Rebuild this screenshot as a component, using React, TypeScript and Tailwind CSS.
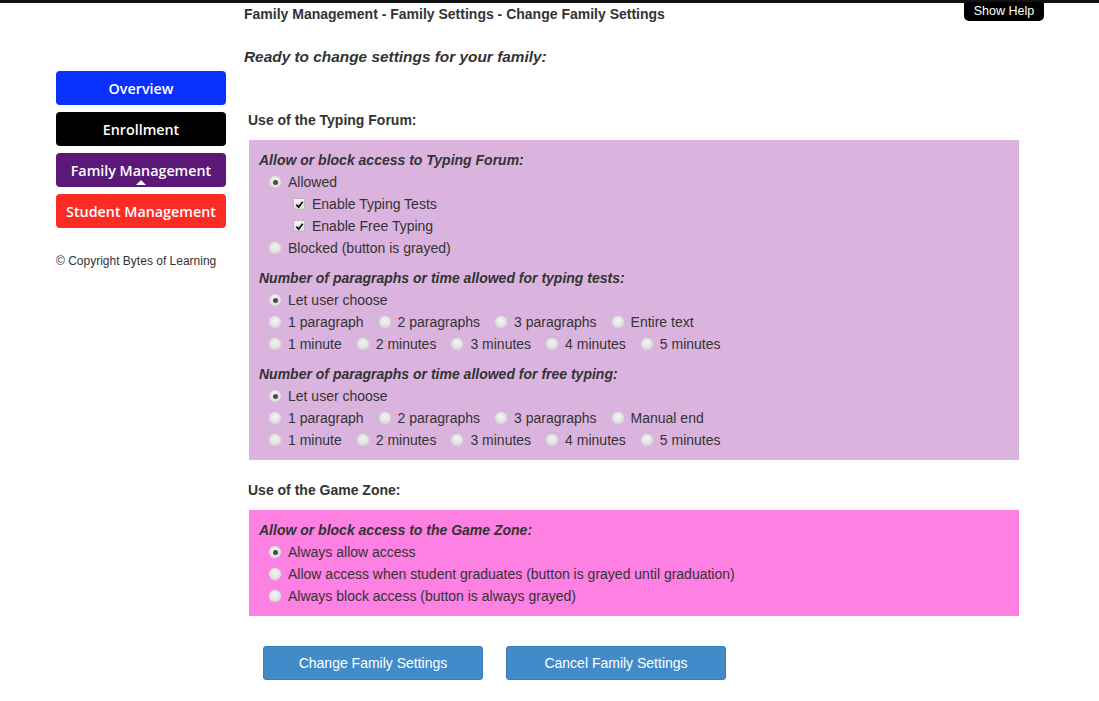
import React from "react";

function Radio({ checked = false }: { checked?: boolean }) {
  return (
    <span className="relative inline-flex w-[12px] h-[12px] rounded-full bg-[radial-gradient(circle_at_50%_40%,#f4f4f4_0%,#e2e2e2_55%,#c9c9c9_100%)] shrink-0 items-center justify-center shadow-[0_0_0_0.5px_#c4c4c4]">
      {checked && <span className="w-[5px] h-[5px] rounded-full bg-[#4a4a4a]" />}
    </span>
  );
}

function Check() {
  return (
    <span className="inline-flex w-[12px] h-[12px] shrink-0 items-center justify-center bg-[linear-gradient(#f6f6f6,#dcdcdc)] border border-[#b8b8b8] rounded-[2px]">
      <svg width="9" height="9" viewBox="0 0 10 10">
        <path d="M1.5 5.2 L4 7.8 L8.6 2" fill="none" stroke="#111" strokeWidth="2" />
      </svg>
    </span>
  );
}

function Row({ children, indent = 20 }: { children: React.ReactNode; indent?: number }) {
  return (
    <div className={`flex items-center h-[22px] ${indent === 20 ? "pl-[10px]" : "pl-[34px]"}`}>{children}</div>
  );
}

function Opt({ label, checked = false }: { label: string; checked?: boolean }) {
  return (
    <span className="inline-flex items-center mr-[15px]">
      <Radio checked={checked} />
      <span className="ml-[7px]">{label}</span>
    </span>
  );
}

function Heading({ children }: { children: React.ReactNode }) {
  return <div className="h-[22px] flex items-center font-bold italic text-[14px]">{children}</div>;
}

function SideBtn({ label, bg, tri = false }: { label: string; bg: string; tri?: boolean }) {
  return (
    <div
      className={`relative h-[34px] w-[170px] rounded-[4px] flex items-center justify-center pt-[2px] text-white text-[14.3px] font-semibold ${bg}`}
      style={{ fontFamily: '"Open Sans", sans-serif' }}
    >
      {label}
      {tri && (
        <span className="absolute bottom-[2px] left-[80px] w-0 h-0 border-l-[5px] border-r-[5px] border-b-[5px] border-l-transparent border-r-transparent border-b-white" />
      )}
    </div>
  );
}

export default function App() {
  return (
    <div
      className="w-[1099px] h-[701px] bg-white text-[#333] overflow-hidden"
      style={{ fontFamily: '"Liberation Sans", Arial, sans-serif' }}
    >
      <div className="h-[3px] bg-[#111]" />
      <div className="flex">
        <aside className="ml-[56px] w-[170px] pt-[68px] flex flex-col gap-[7px]">
          <SideBtn label="Overview" bg="bg-[#0a30fd]" />
          <SideBtn label="Enrollment" bg="bg-black" />
          <SideBtn label="Family Management" bg="bg-[#5b1878]" tri />
          <SideBtn label="Student Management" bg="bg-[#fc2b24]" />
          <div className="mt-[19px] text-[12px] text-[#333] leading-[14px]">© Copyright Bytes of Learning</div>
        </aside>
        <main className="ml-[18px] w-[800px]">
          <div className="flex justify-between items-start">
            <div className="text-[14px] font-bold leading-[22px]">
              Family Management - Family Settings - Change Family Settings
            </div>
            <div className="w-[80px] h-[19px] -mt-[1px] bg-black text-white text-[12.5px] rounded-b-[5px] rounded-t-[2px] flex items-center justify-center">
              Show Help
            </div>
          </div>
          <div className="mt-[22px] h-[20px] flex items-center text-[15.4px] font-bold italic">
            Ready to change settings for your family:
          </div>
          <div className="mt-[43px] ml-[4px] h-[20px] flex items-center text-[14px] font-bold">
            Use of the Typing Forum:
          </div>
          <section className="mt-[10px] ml-[5px] w-[770px] bg-[#dbb3df] pl-[10px] pt-[9px] pb-[9px] text-[14px]">
            <Heading>Allow or block access to Typing Forum:</Heading>
            <Row><Opt label="Allowed" checked /></Row>
            <Row indent={34}>
              <Check />
              <span className="ml-[7px]">Enable Typing Tests</span>
            </Row>
            <Row indent={34}>
              <Check />
              <span className="ml-[7px]">Enable Free Typing</span>
            </Row>
            <Row><Opt label="Blocked (button is grayed)" /></Row>

            <div className="mt-[8px]">
              <Heading>Number of paragraphs or time allowed for typing tests:</Heading>
              <Row><Opt label="Let user choose" checked /></Row>
              <Row>
                <Opt label="1 paragraph" />
                <Opt label="2 paragraphs" />
                <Opt label="3 paragraphs" />
                <Opt label="Entire text" />
              </Row>
              <Row>
                <Opt label="1 minute" />
                <Opt label="2 minutes" />
                <Opt label="3 minutes" />
                <Opt label="4 minutes" />
                <Opt label="5 minutes" />
              </Row>
            </div>

            <div className="mt-[8px]">
              <Heading>Number of paragraphs or time allowed for free typing:</Heading>
              <Row><Opt label="Let user choose" checked /></Row>
              <Row>
                <Opt label="1 paragraph" />
                <Opt label="2 paragraphs" />
                <Opt label="3 paragraphs" />
                <Opt label="Manual end" />
              </Row>
              <Row>
                <Opt label="1 minute" />
                <Opt label="2 minutes" />
                <Opt label="3 minutes" />
                <Opt label="4 minutes" />
                <Opt label="5 minutes" />
              </Row>
            </div>
          </section>

          <div className="mt-[20px] ml-[4px] h-[20px] flex items-center text-[14px] font-bold">
            Use of the Game Zone:
          </div>
          <section className="mt-[10px] ml-[5px] w-[770px] bg-[#fd80e2] pl-[10px] pt-[9px] pb-[9px] text-[14px]">
            <Heading>Allow or block access to the Game Zone:</Heading>
            <Row><Opt label="Always allow access" checked /></Row>
            <Row><Opt label="Allow access when student graduates (button is grayed until graduation)" /></Row>
            <Row><Opt label="Always block access (button is always grayed)" /></Row>
          </section>

          <div className="mt-[30px] ml-[19px] flex gap-[23px]">
            <button className="w-[220px] h-[34px] rounded-[3px] bg-[#428bca] border border-[#3a7cb8] text-white text-[14px]">
              Change Family Settings
            </button>
            <button className="w-[220px] h-[34px] rounded-[3px] bg-[#428bca] border border-[#3a7cb8] text-white text-[14px]">
              Cancel Family Settings
            </button>
          </div>
        </main>
      </div>
    </div>
  );
}
